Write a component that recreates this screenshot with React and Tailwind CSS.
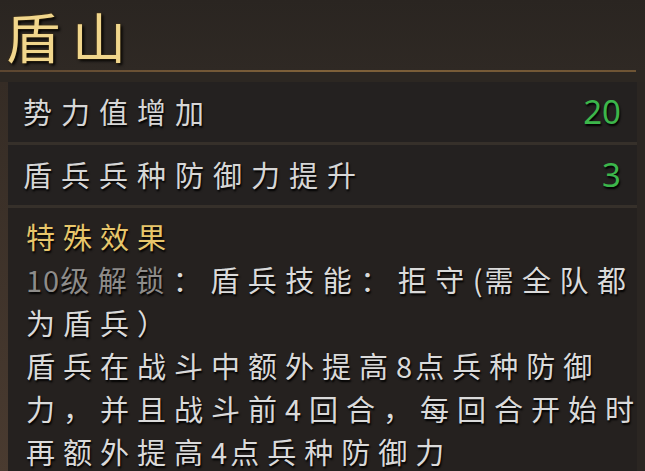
const cjk = { fontFamily: '"Noto Sans CJK SC", "Noto Sans", sans-serif' };

const rows = [
  { label: '势力值增加', value: '20' },
  { label: '盾兵兵种防御力提升', value: '3' },
];

export default function App() {
  return (
    <div
      className="w-[645px] h-[471px] overflow-hidden bg-[#2c2722] flex flex-col"
      style={cjk}
    >
      {/* title */}
      <div className="h-[70px] shrink-0 pl-[6px] pt-[2px] bg-gradient-to-b from-[#2a2521] to-[#2f2924]">
        <h1 className="inline-block text-[54px] leading-[68px] tracking-[12px] font-normal text-[#f1d68c] [text-shadow:0_0_2px_#5a4318,2px_2px_3px_#000]">
          盾山
        </h1>
      </div>
      <div className="h-[2px] w-[636px] shrink-0 bg-gradient-to-r from-[#5c4630] via-[#80623a] to-[#6e5434]" />

      <div className="flex flex-1 pt-[10px]">
        <div className="w-[8px] shrink-0 bg-gradient-to-b from-[#352c25] to-[#4a3b30]" />
        <div className="w-[629px] shrink-0 flex flex-col gap-[3px] bg-[#36302a]">
          {rows.map((r) => (
            <div
              key={r.label}
              className="h-[60px] shrink-0 flex items-center justify-between pl-[15px] pr-[16px] bg-[#242120]"
            >
              <span className="text-[29px] tracking-[9px] text-[#d6d6d6] [text-shadow:1px_2px_2px_#000]">
                {r.label}
              </span>
              <span
                className="text-[33px] text-[#3cb64b] [text-shadow:1px_2px_2px_#000]"
                style={{ fontFamily: '"Noto Sans", Roboto, sans-serif' }}
              >
                {r.value}
              </span>
            </div>
          ))}
          <div className="flex-1 bg-[#25211f] pt-[7px] pl-[18px] text-[29px] leading-[43px] tracking-[8px] whitespace-nowrap [text-shadow:1px_2px_2px_#000]">
            <div className="text-[#e7c66b]">特殊效果</div>
            <div className="text-[#dadada] tracking-[8.5px]">
              <span className="text-[#8e8c8a]">
                <span className="tracking-[1px]">10</span>级解锁
              </span>
              ：盾兵技能：拒守<span className="tracking-[2px]">(</span>需全队都
            </div>
            <div className="text-[#dadada]">为盾兵）</div>
            <div className="text-[#dadada]">
              盾兵在战斗中额外提高<span className="tracking-[3px]">8</span>点兵种防御
            </div>
            <div className="text-[#dadada]">力，并且战斗前4回合，每回合开始时</div>
            <div className="text-[#dadada]">
              再额外提高<span className="tracking-[3px]">4</span>点兵种防御力
            </div>
          </div>
        </div>
        <div className="flex-1 bg-[#2b2622]" />
      </div>
    </div>
  );
}
